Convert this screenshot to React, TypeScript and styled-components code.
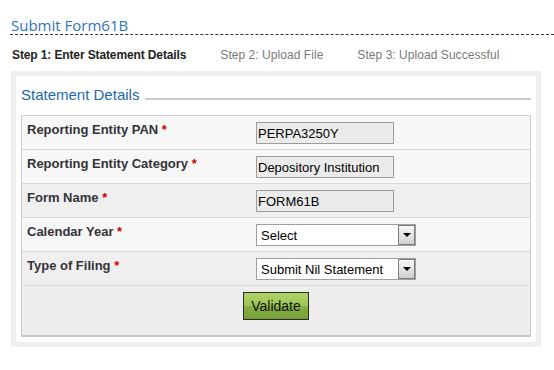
import React from "react";
import styled, { createGlobalStyle } from "styled-components";

const GlobalStyle = createGlobalStyle`
  html, body { margin: 0; padding: 0; background: #ffffff; }
  body { font-family: "Liberation Sans", Arial, sans-serif; }
  * { box-sizing: border-box; }
`;

const Page = styled.div`
  width: 554px;
  height: 370px;
  overflow: hidden;
`;

const Title = styled.h1`
  margin: 16px 0 0 10px;
  padding-left: 1px;
  height: 19px;
  font-family: "Open Sans", "Liberation Sans", sans-serif;
  font-size: 15px;
  font-weight: 400;
  line-height: 18px;
  color: #2f74b9;
  border-bottom: 1px dashed #333;
`;

const Steps = styled.div`
  display: flex;
  gap: 34px;
  margin: 13px 0 0 12px;
  font-size: 12px;
  line-height: 14px;
`;

const Step = styled.span<{ $active?: boolean }>`
  font-weight: ${(p) => (p.$active ? 700 : 400)};
  letter-spacing: ${(p) => (p.$active ? "-0.12px" : "0.05px")};
  color: ${(p) => (p.$active ? "#222" : "#7a7a7a")};
`;

const Box = styled.section`
  margin: 9px 0 0 11px;
  width: 530px;
  height: 276px;
  border: 5px solid #efefef;
  background: #fff;
  padding: 10px 5px 5px 5px;
`;

const LegendRow = styled.div`
  display: flex;
  align-items: flex-start;
  gap: 6px;
  height: 18px;
`;

const LegendText = styled.h2`
  margin: 0;
  font-size: 15px;
  font-weight: 400;
  line-height: 18px;
  color: #1b68ab;
  white-space: nowrap;
`;

const LegendLine = styled.div`
  flex: 1;
  height: 2px;
  margin-top: 12px;
  background: #cccccc;
`;

const Table = styled.div`
  margin-top: 11px;
  border: 1px solid #cfcfcf;
  border-bottom: 2px solid #c8c8c8;
`;

const Row = styled.div<{ $shade?: boolean }>`
  display: grid;
  grid-template-columns: 234px 1fr;
  align-items: start;
  height: 34px;
  padding-top: 6px;
  background: ${(p) => (p.$shade ? "#efefef" : "#f7f7f7")};
  border-bottom: 1px solid #d9d9d9;
`;

const Label = styled.label`
  padding-left: 5px;
  font-size: 13px;
  font-weight: 700;
  line-height: 16px;
  color: #333338;
`;

const Req = styled.span`
  color: #cc0000;
`;

const TextInput = styled.input`
  width: 138px;
  height: 22px;
  margin: 0;
  padding: 0 0 0 1px;
  border: 1px solid #9c9c9c;
  background: #ebebeb;
  font-family: "Liberation Sans", Arial, sans-serif;
  font-size: 13px;
  color: #000;
  outline: none;
`;

const SelectWrap = styled.div`
  position: relative;
  width: 160px;
  height: 22px;
`;

const Select = styled.select`
  appearance: none;
  -webkit-appearance: none;
  width: 100%;
  height: 22px;
  margin: 0;
  padding: 0 0 0 4px;
  border: 1px solid #9f9f9f;
  border-radius: 0;
  background: #fff;
  font-family: "Liberation Sans", Arial, sans-serif;
  font-size: 13px;
  color: #000;
  outline: none;
`;

const Arrow = styled.span`
  position: absolute;
  top: 1px;
  right: 1px;
  width: 17px;
  height: 20px;
  border: 1px solid #7d7d7d;
  background: linear-gradient(#f7f7f7, #d0d0d0);
  pointer-events: none;
  display: flex;
  align-items: center;
  justify-content: center;
  &::after {
    content: "";
    width: 0;
    height: 0;
    border-left: 4px solid transparent;
    border-right: 4px solid transparent;
    border-top: 4px solid #000;
  }
`;

const ButtonRow = styled.div`
  height: 49px;
  padding: 6px 0 0 221px;
  background: #eeeeee;
`;

const Button = styled.button`
  width: 66px;
  height: 28px;
  margin: 0;
  padding: 0;
  border: 1px solid #2b2b2b;
  border-radius: 0;
  background: linear-gradient(#b0d467 0%, #9cc453 50%, #86b043 51%, #76a037 100%);
  font-family: "Liberation Sans", Arial, sans-serif;
  font-size: 14px;
  color: #111;
  cursor: pointer;
`;

type Field =
  | { label: string; kind: "text"; value: string; shade?: boolean }
  | { label: string; kind: "select"; value: string; options: string[]; shade?: boolean };

const fields: Field[] = [
  { label: "Reporting Entity PAN", kind: "text", value: "PERPA3250Y" },
  { label: "Reporting Entity Category", kind: "text", value: "Depository Institution" },
  { label: "Form Name", kind: "text", value: "FORM61B", shade: true },
  { label: "Calendar Year", kind: "select", value: "Select", options: ["Select", "2015", "2016", "2017"] },
  {
    label: "Type of Filing",
    kind: "select",
    value: "Submit Nil Statement",
    options: ["Submit Nil Statement", "Original", "Correction"],
    shade: true,
  },
];

export default function App() {
  return (
    <>
      <GlobalStyle />
      <Page>
        <Title>Submit Form61B</Title>
        <Steps>
          <Step $active>Step 1: Enter Statement Details</Step>
          <Step>Step 2: Upload File</Step>
          <Step>Step 3: Upload Successful</Step>
        </Steps>
        <Box>
          <LegendRow>
            <LegendText>Statement Details</LegendText>
            <LegendLine />
          </LegendRow>
          <Table>
            {fields.map((f) => (
              <Row key={f.label} $shade={f.shade}>
                <Label>
                  {f.label} <Req>*</Req>
                </Label>
                {f.kind === "text" ? (
                  <TextInput readOnly value={f.value} />
                ) : (
                  <SelectWrap>
                    <Select defaultValue={f.value}>
                      {f.options.map((o) => (
                        <option key={o}>{o}</option>
                      ))}
                    </Select>
                    <Arrow />
                  </SelectWrap>
                )}
              </Row>
            ))}
            <ButtonRow>
              <Button type="button">Validate</Button>
            </ButtonRow>
          </Table>
        </Box>
      </Page>
    </>
  );
}
